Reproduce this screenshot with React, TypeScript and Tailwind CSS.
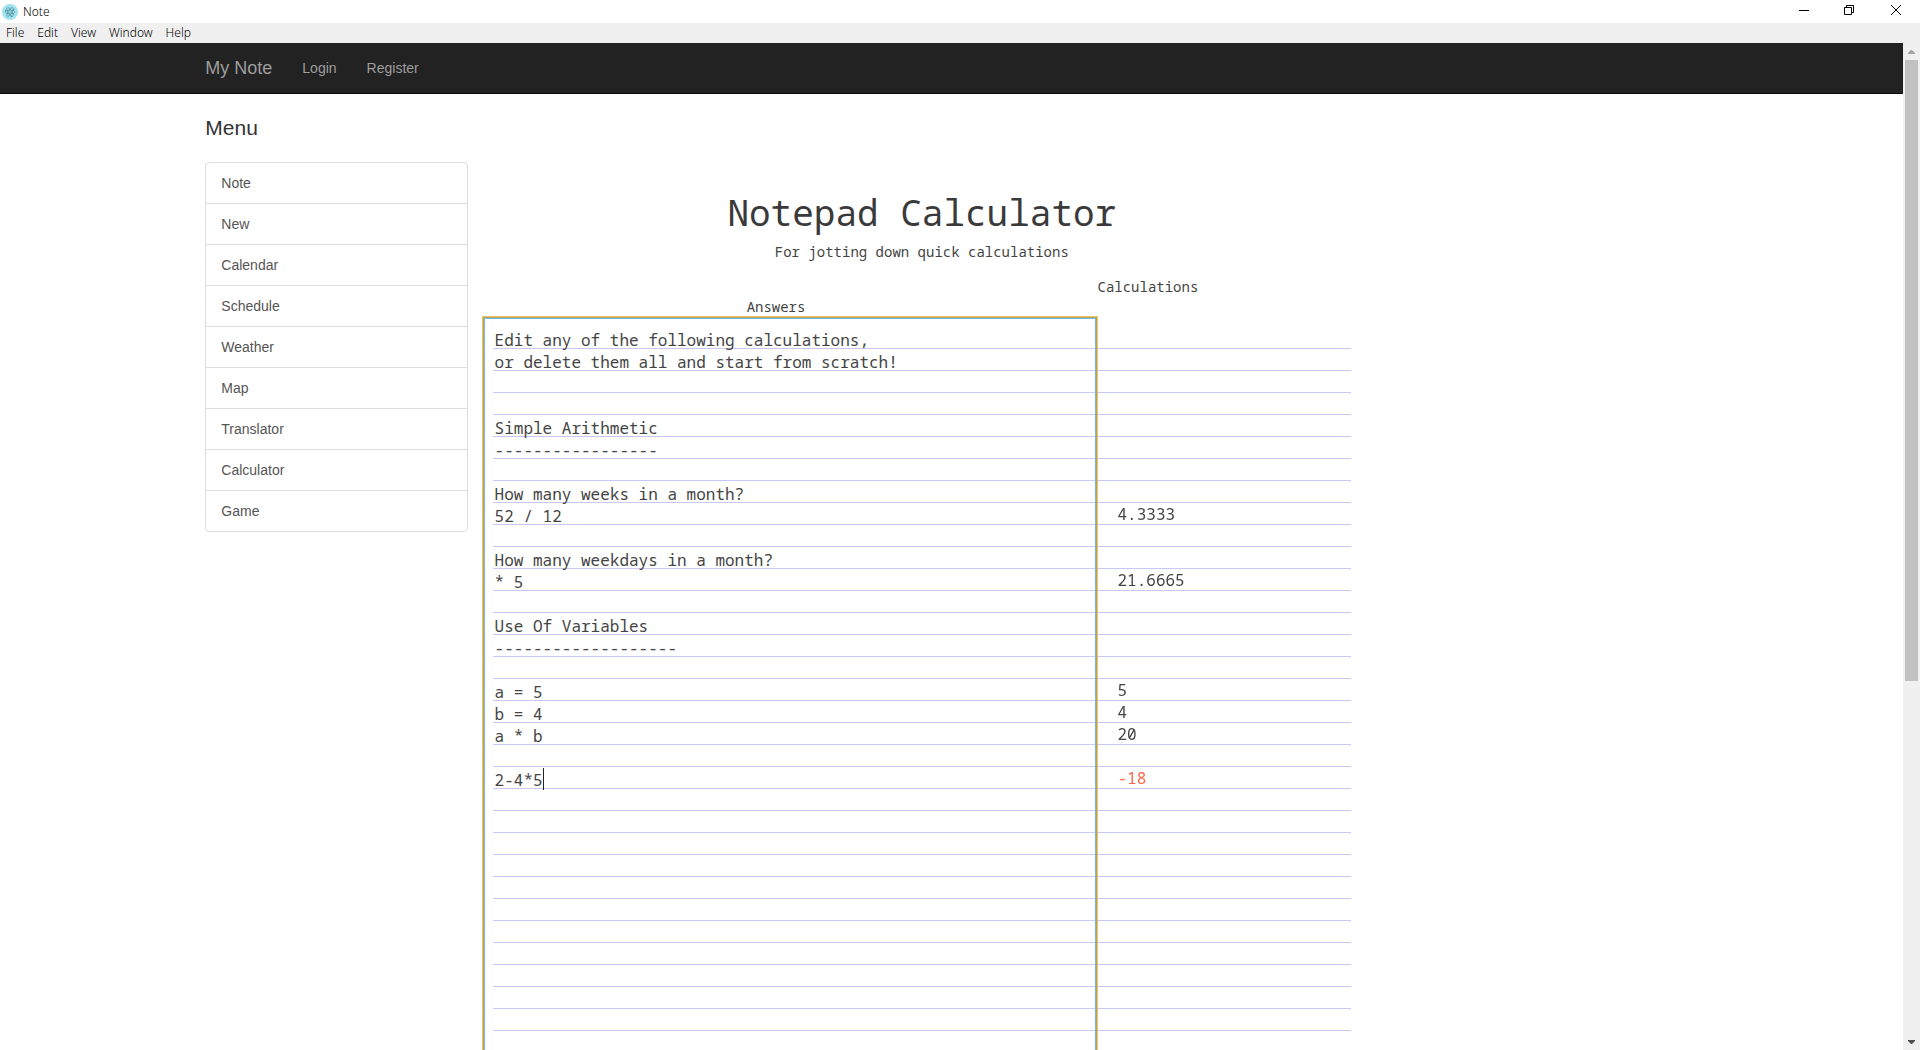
import React, { useEffect, useRef } from "react";

const windowMenus = ["File", "Edit", "View", "Window", "Help"];
const links = ["Note", "New", "Calendar", "Schedule", "Weather", "Map", "Translator", "Calculator", "Game"];

const source = [
  "Edit any of the following calculations,",
  "or delete them all and start from scratch!",
  "",
  "",
  "Simple Arithmetic",
  "-----------------",
  "",
  "How many weeks in a month?",
  "52 / 12",
  "",
  "How many weekdays in a month?",
  "* 5",
  "",
  "Use Of Variables",
  "-------------------",
  "",
  "a = 5",
  "b = 4",
  "a * b",
  "",
  "2-4*5",
].join("\n");

const results = ["", "", "", "", "", "", "", "", "4.3333", "", "", "21.6665", "", "", "", "", "5", "4", "20", "", "-18"];

function AppIcon() {
  return (
    <svg viewBox="0 0 16 16" className="size-4" aria-hidden="true">
      <circle cx="8" cy="8" r="8" fill="#9fe3ee" />
      <g fill="none" stroke="#4b8793" strokeWidth="0.6">
        <ellipse cx="8" cy="8" rx="5" ry="1.9" />
        <ellipse cx="8" cy="8" rx="5" ry="1.9" transform="rotate(60 8 8)" />
        <ellipse cx="8" cy="8" rx="5" ry="1.9" transform="rotate(120 8 8)" />
      </g>
      <g fill="#4b8793">
        <circle cx="8" cy="8" r="0.6" />
        <circle cx="3.6" cy="6.6" r="0.7" />
        <circle cx="11.8" cy="5.2" r="0.7" />
        <circle cx="9.6" cy="12.4" r="0.7" />
      </g>
    </svg>
  );
}

function TitleBar() {
  return (
    <header className="flex h-[23px] shrink-0 items-center bg-white pl-0.5 text-xs font-light text-black">
      <AppIcon />
      <span className="ml-[5px] grow">Note</span>
      <button aria-label="Minimize" className="flex h-5 w-[45px] items-center justify-center self-start">
        <svg viewBox="0 0 10 10" className="size-2.5" shapeRendering="crispEdges"><path d="M0 5h10v1H0z" /></svg>
      </button>
      <button aria-label="Restore" className="flex h-5 w-[45px] items-center justify-center self-start">
        <svg viewBox="0 0 10 10" className="size-2.5" fill="none" stroke="#000"><path d="M.5 2.5h7v7h-7zM2.5 2.5v-2h7v7h-2" /></svg>
      </button>
      <button aria-label="Close" className="flex h-5 w-[49px] items-center justify-center self-start">
        <svg viewBox="0 0 10 10" className="size-2.5" fill="none" stroke="#000"><path d="M0 0l10 10M10 0L0 10" /></svg>
      </button>
    </header>
  );
}

function Scrollbar() {
  return (
    <div className="flex w-[17px] shrink-0 flex-col bg-[#f0f0f0]" aria-hidden="true">
      <div className="flex h-[17px] items-center justify-center">
        <svg viewBox="0 0 7 4" className="h-1 w-[7px]" fill="#a3a3a3"><path d="M0 4v-1l3-3h1l3 3v1z" /></svg>
      </div>
      <div className="flex grow flex-col px-0.5">
        <div className="h-[63.8%] bg-[#c1c1c1]" />
      </div>
      <div className="flex h-[17px] items-center justify-center">
        <svg viewBox="0 0 7 4" className="h-1 w-[7px]" fill="#505050"><path d="M0 0v1l3 3h1l3-3v-1z" /></svg>
      </div>
    </div>
  );
}

function Notepad() {
  const pad = useRef<HTMLTextAreaElement>(null);
  useEffect(() => {
    pad.current?.focus({ preventScroll: true });
    pad.current?.setSelectionRange(source.length, source.length);
  }, []);
  return (
    <section className="w-[57.7%] pt-[91px] font-['Noto_Sans_Mono','DejaVu_Sans_Mono',monospace] text-[#444]">
      <h1 className="text-center text-4xl leading-[56px] text-[#3a3a3a]">Notepad Calculator</h1>
      <p className="mt-px text-center text-sm leading-5">For jotting down quick calculations</p>
      <div className="mt-[15px] flex text-sm leading-5">
        <label htmlFor="pad" className="w-[70%] pt-5 pr-7 text-center">Answers</label>
        <span>Calculations</span>
      </div>
      <div className="grid">
        <div className="col-start-1 row-start-1 mx-2.5 mt-2.5 h-[770px] bg-[repeating-linear-gradient(to_bottom,transparent_0_21px,#c8c8f0_21px_22px)]" />
        <div className="relative col-start-1 row-start-1 flex text-base leading-[22px]">
          <textarea
            id="pad"
            ref={pad}
            spellCheck={false}
            defaultValue={source}
            className="h-[770px] w-[70%] resize-none overflow-hidden border-2 border-[#74b9e4] bg-transparent px-2.5 pt-2.5 caret-transparent outline-2 -outline-offset-1 outline-[#e59700]/60"
          />
          <span aria-hidden="true" className="absolute top-[451px] left-[60px] h-[22px] w-px bg-[#222]" />
          <output htmlFor="pad" className="block pt-2.5 pl-5">
            {results.map((value, i) => (
              <span key={i} className={value.startsWith("-") ? "block h-[22px] text-[#ff6347]" : "block h-[22px]"}>{value}</span>
            ))}
          </output>
        </div>
      </div>
    </section>
  );
}

export default function App() {
  return (
    <div className="flex h-screen flex-col overflow-hidden bg-white font-['Noto_Sans',sans-serif]">
      <TitleBar />
      <nav aria-label="Window" className="flex h-5 shrink-0 items-center gap-[13px] bg-[#f0f0f0] pl-1.5 text-xs font-light text-black">
        {windowMenus.map((item) => (
          <button key={item}>{item}</button>
        ))}
      </nav>
      <div className="flex min-h-0 grow">
        <div className="min-w-0 grow overflow-hidden font-['Liberation_Sans',Arial,sans-serif] text-sm">
          <nav aria-label="Main" className="flex h-[51px] items-center border-b border-[#080808] bg-[#222] px-[10%] text-[#9d9d9d]">
            <a href="#home" className="px-[15px] text-lg">My Note</a>
            <a href="#login" className="px-[15px]">Login</a>
            <a href="#register" className="px-[15px]">Register</a>
          </nav>
          <div className="flex items-start px-[10%]">
            <aside className="w-[19.2%] px-[15px] pt-5">
              <h2 className="text-[21px] leading-7 text-[#333]">Menu</h2>
              <ul className="mt-5 divide-y divide-[#ddd] rounded border border-[#ddd] text-[#555]">
                {links.map((item) => (
                  <li key={item}>
                    <a href={"#" + item.toLowerCase()} className="block px-[15px] py-2.5 leading-5">{item}</a>
                  </li>
                ))}
              </ul>
            </aside>
            <Notepad />
          </div>
        </div>
        <Scrollbar />
      </div>
    </div>
  );
}
